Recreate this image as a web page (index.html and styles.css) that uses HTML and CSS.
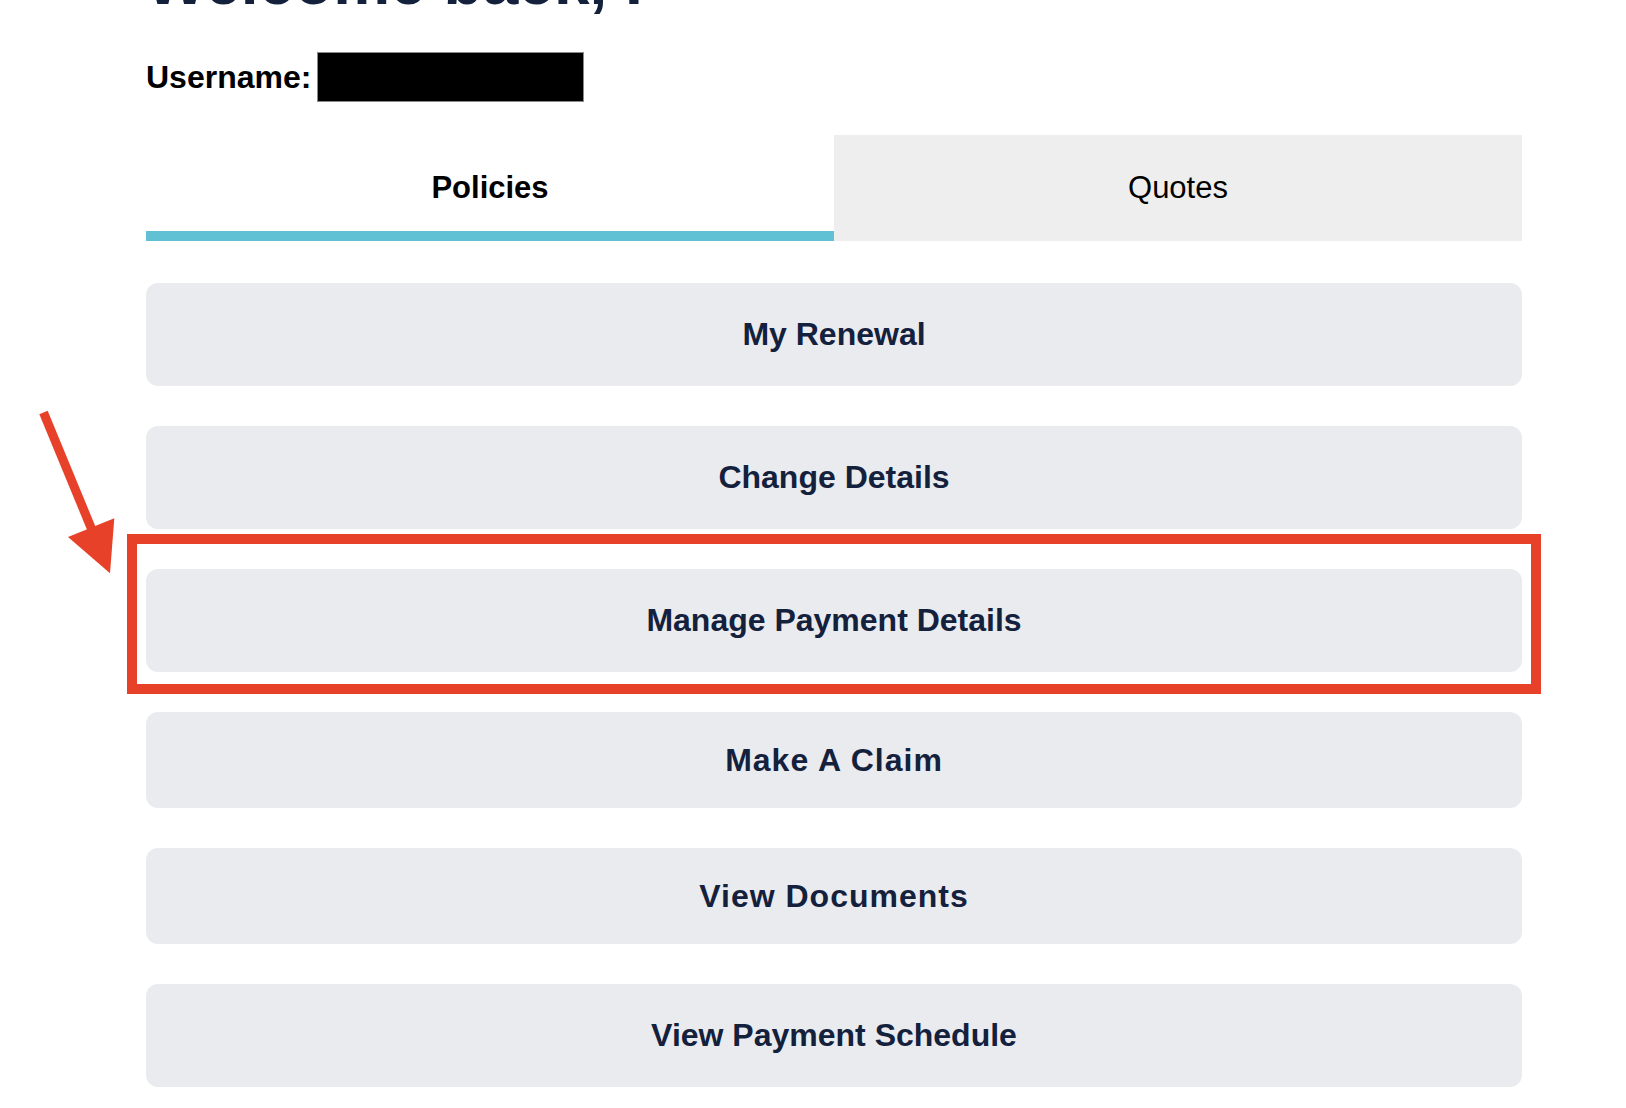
FILE: index.html
```html
<!DOCTYPE html>
<html lang="en">
<head>
<meta charset="UTF-8">
<meta name="viewport" content="width=device-width, initial-scale=1.0">
<title>My Account</title>
<link rel="stylesheet" href="styles.css">
</head>
<body>

<main class="account">
    <h1 class="welcome">Welcome back, I</h1>

    <div class="username-row">
        <span class="username-label">Username:</span>
        <span class="redacted"></span>
    </div>

    <nav class="tabs">
        <a href="#" class="tab tab-active">Policies</a>
        <a href="#" class="tab tab-muted">Quotes</a>
    </nav>

    <ul class="actions">
        <li><a href="#" class="action-btn">My Renewal</a></li>
        <li><a href="#" class="action-btn">Change Details</a></li>
        <li class="highlighted">
            <a href="#" class="action-btn">Manage Payment Details</a>
            <!-- annotation drawn over the screenshot -->
            <span class="callout-box"></span>
            <svg class="callout-arrow" width="80" height="170" viewBox="0 0 80 170">
                <line x1="7.5" y1="3.5" x2="56" y2="121" stroke="#e8412a" stroke-width="9"/>
                <polygon points="32,128 78.3,109.3 74,164.3" fill="#e8412a"/>
            </svg>
        </li>
        <li><a href="#" class="action-btn action-btn-compact">Make A Claim</a></li>
        <li><a href="#" class="action-btn action-btn-compact">View Documents</a></li>
        <li><a href="#" class="action-btn">View Payment Schedule</a></li>
    </ul>
</main>

</body>
</html>
```

FILE: styles.css
```css
body {
    font-family: "Liberation Sans", Arial, sans-serif;
    margin: 0;
    padding: 0;
    background-color: #fff;
    overflow: hidden;
}
.account {
    width: 1376px;
    margin-left: 146px;
}
.welcome {
    margin: -50px 0 0;
    font-size: 64px;
    line-height: 64px;
    font-weight: 700;
    color: #14213d;
    white-space: nowrap;
}
.username-row {
    display: flex;
    align-items: center;
    height: 50px;
    margin-top: 38px;
}
.username-label {
    font-size: 32px;
    font-weight: 700;
    color: #000;
}
.redacted {
    width: 267px;
    height: 50px;
    margin-left: 6px;
    box-sizing: border-box;
    background-color: #000;
    border: 1px solid #8a8a8a;
}
.tabs {
    display: flex;
    margin-top: 33px;
}
.tab {
    flex: 1;
    height: 106px;
    display: flex;
    align-items: center;
    justify-content: center;
    font-size: 31px;
    color: #000;
    text-decoration: none;
}
.tab-active {
    font-weight: 700;
    box-shadow: inset 0 -10px 0 #5fc1d3;
}
.tab-muted {
    background-color: #eeeeee;
}
.actions {
    list-style: none;
    margin: 42px 0 0;
    padding: 0;
    display: flex;
    flex-direction: column;
    gap: 40px;
}
.action-btn {
    display: flex;
    height: 103px;
    align-items: center;
    justify-content: center;
    background-color: #eaebef;
    border-radius: 12px;
    font-size: 32px;
    font-weight: 700;
    color: #14213d;
    text-decoration: none;
}
.action-btn-compact {
    height: 96px;
    letter-spacing: 1px;
}
.highlighted {
    position: relative;
}
.callout-box {
    position: absolute;
    top: -35px;
    bottom: -22px;
    left: -19px;
    right: -19px;
    border: 10px solid #e8412a;
    pointer-events: none;
}
.callout-arrow {
    position: absolute;
    left: -110px;
    top: -160px;
    overflow: visible;
}
```
